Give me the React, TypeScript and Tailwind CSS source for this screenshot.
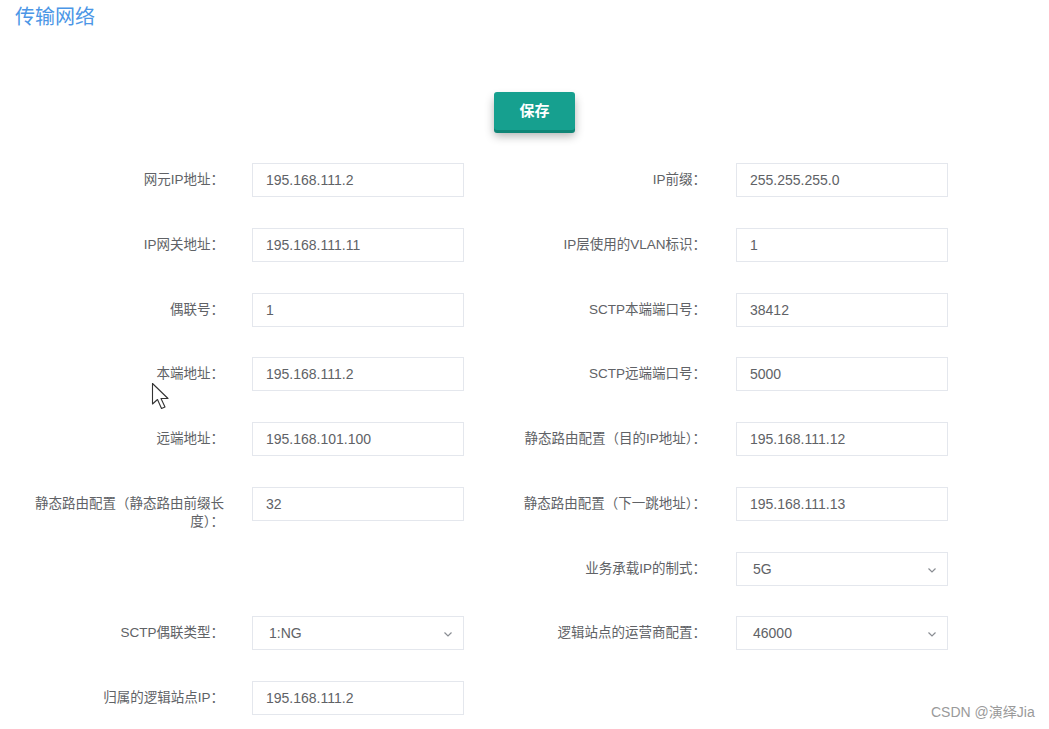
import React from "react";

type Field = { label: string; value: string; select?: boolean } | null;

const rows: [Field, Field][] = [
    [{label: "网元IP地址：", value: "195.168.111.2"}, {label: "IP前缀：", value: "255.255.255.0"}],
    [{label: "IP网关地址：", value: "195.168.111.11"}, {label: "IP层使用的VLAN标识：", value: "1"}],
    [{label: "偶联号：", value: "1"}, {label: "SCTP本端端口号：", value: "38412"}],
    [{label: "本端地址：", value: "195.168.111.2"}, {label: "SCTP远端端口号：", value: "5000"}],
    [{label: "远端地址：", value: "195.168.101.100"}, {label: "静态路由配置（目的IP地址）：", value: "195.168.111.12"}],
    [{label: "静态路由配置（静态路由前缀长度）：", value: "32"}, {label: "静态路由配置（下一跳地址）：", value: "195.168.111.13"}],
    [null, {label: "业务承载IP的制式：", value: "5G", select: true}],
    [{label: "SCTP偶联类型：", value: "1:NG", select: true}, {label: "逻辑站点的运营商配置：", value: "46000", select: true}],
    [{label: "归属的逻辑站点IP：", value: "195.168.111.2"}, null],
]

const Chevron = () => (
    <svg width="10" height="10" viewBox="0 0 10 10" className="absolute right-[10px] top-[12px]">
        <path d="M1.5 3.5 L5 7 L8.5 3.5" fill="none" stroke="#8a8d93" strokeWidth="1.2"/>
    </svg>
)

const FormField = ({field, labelBox, gap}: { field: Field; labelBox: string; gap: string }) => {
    if (!field) return <div className="w-[484px]"/>
    return (
        <div className="flex w-[484px] items-start">
            <label className={`${labelBox} shrink-0 pt-[8px] text-right text-[13.5px] leading-[18px] text-[#606266]`}>
                {field.label}
            </label>
            <div className={`${gap} relative h-[34px] w-[212px] shrink-0 border border-[#e4e7ed] bg-white`}>
                <div className={`${field.select ? "pl-[16px]" : "pl-[13px]"} text-[14px] leading-[32px] text-[#606266]`}>
                    {field.value}
                </div>
                {field.select && <Chevron/>}
            </div>
        </div>
    )
}

export default function App() {
    return (
        <div
            className="relative h-[729px] w-[1049px] overflow-hidden bg-white"
            style={{fontFamily: '"Liberation Sans", "Noto Sans CJK SC", sans-serif'}}
        >
            <h1 className="pl-[15px] pt-[4px] text-[20px] leading-[26px] font-normal text-[#4b96e6]">传输网络</h1>

            <div className="mt-[62px] flex pl-[494px]">
                <button
                    className="h-[38px] w-[81px] rounded-[3px] bg-[#16a08f] text-[15px] font-bold text-white shadow-[0_3px_0_#0f8576,0_6px_10px_rgba(0,0,0,0.3)]"
                >
                    保存
                </button>
            </div>

            <div className="mt-[33px] flex flex-col">
                {rows.map(([left, right], i) => (
                    <div key={i} className="flex h-[64.75px]">
                        <FormField field={left} labelBox="ml-[28px] w-[196px]" gap="ml-[28px]"/>
                        <FormField field={right} labelBox="ml-[26px] w-[196px]" gap="ml-[30px]"/>
                    </div>
                ))}
            </div>

            <svg width="22" height="30" viewBox="0 0 22 30" className="absolute left-[151px] top-[382px]">
                <path d="M1.5 1.5 L1.5 22 L6.5 17.5 L10.5 26.5 L14 25 L10 16.5 L17 16.5 Z" fill="white"
                      stroke="#333" strokeWidth="1.1" strokeLinejoin="round"/>
            </svg>

            <div className="absolute left-[931px] top-[702px] text-[14px] text-[#9a9a9a]">CSDN @演绎Jia</div>
        </div>
    )
}
